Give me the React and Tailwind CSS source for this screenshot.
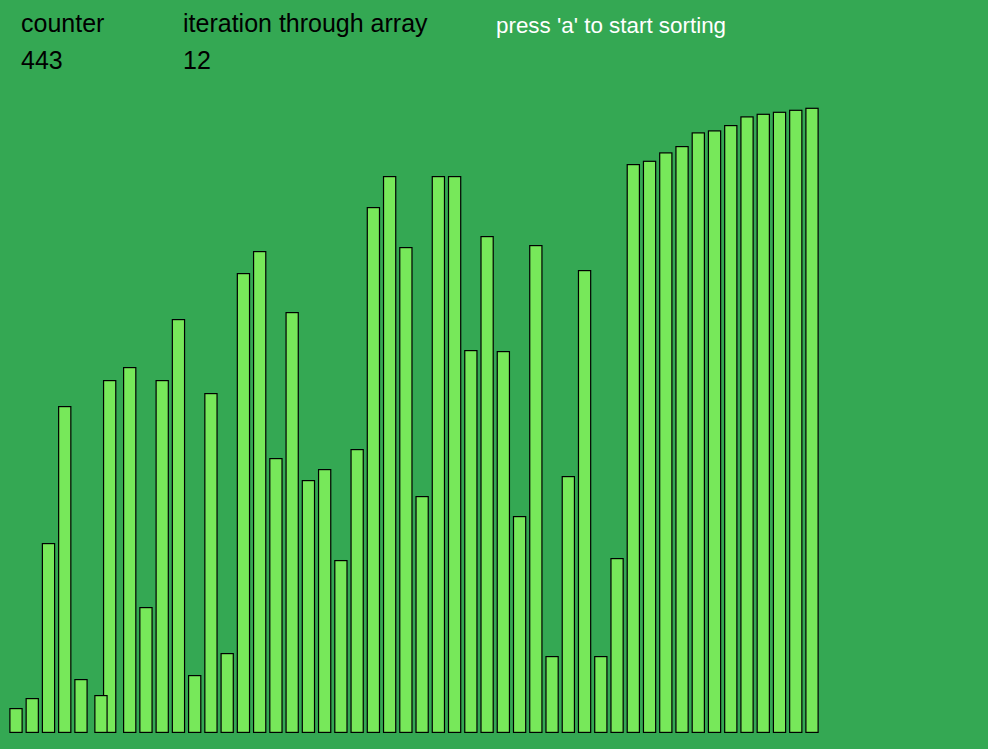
import React from "react";

const tops = [
  708, 698, 543, 406, 679, 695, 380, 367, 607, 380,
  319, 675, 393, 653, 273, 251, 458, 312, 480, 469,
  560, 449, 207, 176, 247, 496, 176, 176, 350, 236,
  351, 516, 245, 656, 476, 270, 656, 558, 164, 160.7,
  152.3, 146, 132.3, 130.3, 125, 116.3, 113.7, 111.7, 109.7, 107.7,
];

const offsets = { 5: 3.75, 6: -3.8 };
const BOTTOM = 733;
const order = [...tops.keys()].filter((i) => i !== 5).concat([5]);

export default function App() {
  return (
    <div
      className="w-full h-[749px] bg-[#34a853] overflow-hidden"
      style={{ fontFamily: '"Liberation Sans", Arial, sans-serif' }}
    >
      <div className="flex pt-[5px] text-[25px] leading-[37px] h-[79px]">
        <div className="w-[183px] shrink-0 pl-[21px] flex flex-col text-black">
          <span>counter</span>
          <span>443</span>
        </div>
        <div className="w-[313px] shrink-0 flex flex-col text-black">
          <span>iteration through array</span>
          <span>12</span>
        </div>
        <div className="flex flex-col text-white text-[22.4px] mt-[2px]">
          <span>press 'a' to start sorting</span>
        </div>
      </div>
      <svg width="988" height="670" viewBox="0 79 988 670" className="block">
        {order.map((i) => {
          const t = tops[i];
          const x = 9.3 + 16.245 * i + (offsets[i] || 0);
          return (
            <rect
              key={i}
              x={x + 0.6}
              y={t + 0.6}
              width={12.2}
              height={BOTTOM - t - 1.2}
              fill="#77e85a"
              stroke="#000"
              strokeWidth="1.2"
            />
          );
        })}
      </svg>
    </div>
  );
}
